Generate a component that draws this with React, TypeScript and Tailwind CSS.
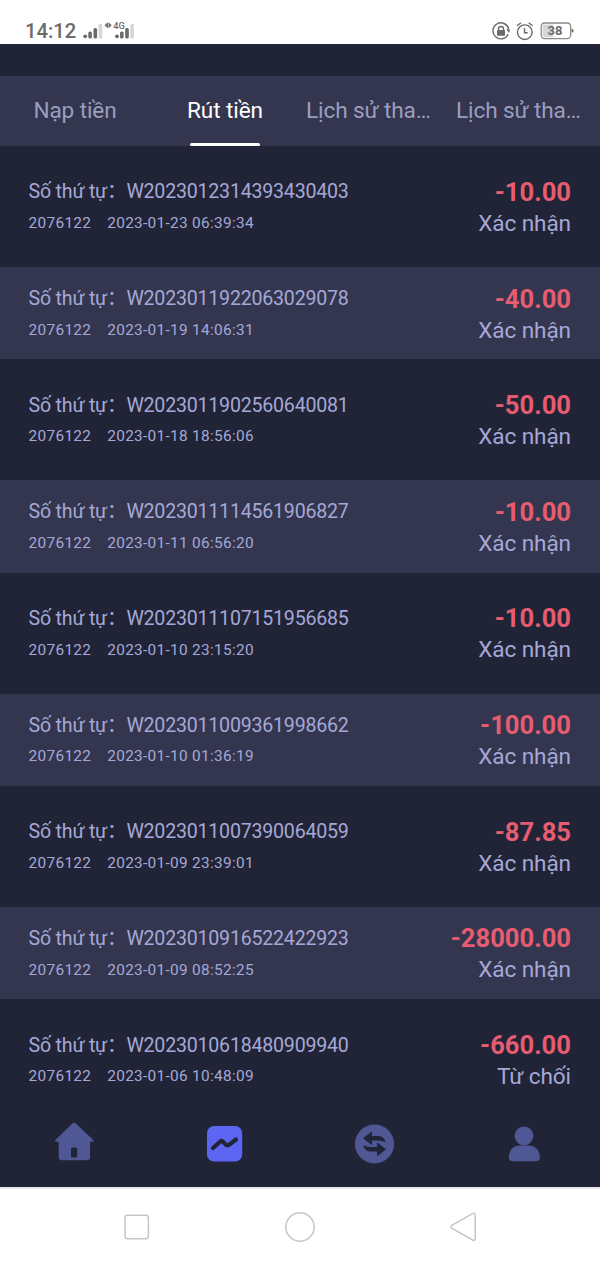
import React from "react";

interface Withdrawal {
  order: string;
  time: string;
  amount: string;
  status: string;
}

const USER_ID = "2076122";

const tabs = ["Nạp tiền", "Rút tiền", "Lịch sử tha…", "Lịch sử tha…"];

const withdrawals: Withdrawal[] = [
  { order: "W2023012314393430403", time: "2023-01-23 06:39:34", amount: "-10.00", status: "Xác nhận" },
  { order: "W2023011922063029078", time: "2023-01-19 14:06:31", amount: "-40.00", status: "Xác nhận" },
  { order: "W2023011902560640081", time: "2023-01-18 18:56:06", amount: "-50.00", status: "Xác nhận" },
  { order: "W2023011114561906827", time: "2023-01-11 06:56:20", amount: "-10.00", status: "Xác nhận" },
  { order: "W2023011107151956685", time: "2023-01-10 23:15:20", amount: "-10.00", status: "Xác nhận" },
  { order: "W2023011009361998662", time: "2023-01-10 01:36:19", amount: "-100.00", status: "Xác nhận" },
  { order: "W2023011007390064059", time: "2023-01-09 23:39:01", amount: "-87.85", status: "Xác nhận" },
  { order: "W2023010916522422923", time: "2023-01-09 08:52:25", amount: "-28000.00", status: "Xác nhận" },
  { order: "W2023010618480909940", time: "2023-01-06 10:48:09", amount: "-660.00", status: "Từ chối" },
];

const StatusBar = () => (
  <header className="flex h-11 shrink-0 items-end bg-white pr-[26px] pb-[3px] pl-[25px] text-[#6b6b6b]">
    <span className="text-[20.2px] leading-[20px] font-medium">14:12</span>
    {/* signal bars, two SIMs */}
    <svg width="52" height="20" viewBox="0 0 52 20" className="ml-[6.5px]" fill="#6b6b6b">
      <circle cx="2.2" cy="15.3" r="1.9" />
      <rect x="5.3" y="10.5" width="3.6" height="7" rx="1.5" />
      <rect x="10.5" y="7" width="3.6" height="10.5" rx="1.5" />
      <rect x="15.6" y="3" width="3.6" height="14.5" rx="1" fill="#d6d6d6" />
      <path d="M21.5 4.2 L24.3 1.7 V6.7 Z M28.8 4.2 L26 1.7 V6.7 Z" />
      <rect x="24" y="1.7" width="0.9" height="5.2" />
      <rect x="25.5" y="1.7" width="0.9" height="5.2" />
      <circle cx="34" cy="15.3" r="1.9" />
      <rect x="37" y="10.5" width="3.6" height="7" rx="1.5" />
      <rect x="42.2" y="7" width="3.6" height="10.5" rx="1.5" />
      <rect x="47.3" y="3" width="3.6" height="14.5" rx="1" fill="#d6d6d6" />
      <text x="30.3" y="8.2" fontSize="9.2" fontWeight="500">4G</text>
    </svg>
    <div className="ml-auto flex items-center gap-[6px]">
      {/* rotation lock */}
      <svg width="18" height="20" viewBox="0 0 18 20" fill="none" stroke="#6b6b6b">
        <path d="M16.2 13.2 A8 8 0 1 1 16.7 8" strokeWidth="1.4" />
        <path d="M14.3 8.3 H18 L17 12 Z" fill="#6b6b6b" stroke="none" />
        <rect x="5" y="9" width="8" height="5.8" rx="0.8" fill="#6b6b6b" stroke="none" />
        <path d="M6.5 9.5 V8 A2.5 2.5 0 0 1 11.5 8 V9.5" strokeWidth="1.4" />
      </svg>
      {/* alarm */}
      <svg width="18" height="20" viewBox="0 0 18 20" fill="none" stroke="#6b6b6b" strokeWidth="1.4">
        <circle cx="8.8" cy="11.2" r="7.3" />
        <path d="M8.5 7 V11.7 H11.7" />
        <path d="M1 4.8 L5 1.8 M12.6 1.8 L16.6 4.8" />
      </svg>
      {/* battery */}
      <svg width="34" height="20" viewBox="0 0 34 20">
        <rect x="1.2" y="2" width="29.5" height="15.6" rx="3.5" fill="#fff" stroke="#8a8a8a" strokeWidth="1.3" />
        <path d="M5 3.4 H13 V16.2 H5 Q2.6 16.2 2.6 13.8 V5.8 Q2.6 3.4 5 3.4 Z" fill="#d6d6d6" />
        <rect x="31.6" y="8" width="1.8" height="3.6" rx="0.8" fill="#6b6b6b" />
        <text x="15" y="14.4" fontSize="13" fontWeight="700" textAnchor="middle" fill="#6b6b6b">38</text>
      </svg>
    </div>
  </header>
);

const Tabs = () => (
  <nav className="grid h-[70px] shrink-0 grid-cols-4 bg-[#34364f] text-[22.6px] leading-[70px] tracking-[-0.1px] whitespace-nowrap text-[#9a9ebf]">
    {tabs.map((tab, i) => (
      <div key={i} className="flex flex-col items-center px-[6px]">
        <span className={i === 1 ? "h-[67px] text-white" : i > 1 ? "h-[67px] w-full" : "h-[67px]"}>
          {tab}
        </span>
        {i === 1 && <span className="h-[3px] w-[70px] rounded-full bg-white" />}
      </div>
    ))}
  </nav>
);

const Row = ({ item }: { item: Withdrawal }) => (
  <li className="flex h-[92.4px] shrink-0 justify-between px-[29px] pt-[15.5px] text-[#a5a8d6] even:bg-[#34364f]">
    <div className="-ml-[0.4px] pt-[0.6px]">
      <p className="h-[30.6px] text-[19.6px] leading-8 tracking-[-0.22px] whitespace-nowrap">Số thứ tự：{item.order}</p>
      <p className="flex h-8 gap-4 text-[15.4px] leading-8 tracking-[0.3px]">
        <span>{USER_ID}</span>
        <span>{item.time}</span>
      </p>
    </div>
    <div className="text-right">
      <p className="h-8 text-[25.6px] leading-8 font-bold text-[#e65c70]">{item.amount}</p>
      <p className="h-8 text-[22.6px] leading-8 tracking-[-0.1px]">{item.status}</p>
    </div>
  </li>
);

const BottomNav = () => (
  <nav className="grid h-[87px] shrink-0 grid-cols-4 place-items-center bg-[#212436]">
    {/* home */}
    <svg width="40" height="40" viewBox="0 0 40 40" fill="#4f5894" className="overflow-visible">
      <path d="M18 -0.9 Q19.1 -1.8 20.2 -0.9 L38.3 16 Q39.2 17.8 37.4 17.8 H35 V33 Q35 36.3 31.7 36.3 H7 Q3.7 36.3 3.7 33 V17.8 H1 Q-0.8 17.6 0.3 16 Z" />
      <rect x="16" y="23.5" width="6.2" height="10" rx="1.5" fill="#212436" />
    </svg>
    {/* records */}
    <svg width="40" height="40" viewBox="0 0 40 40">
      <rect x="2" y="2" width="35.2" height="35.5" rx="7" fill="#5c66f2" />
      <path
        d="M8 24 L15 17.7 Q16.6 16.3 18 17.8 L21 20.7 Q22.3 22 24 20.8 L31 15.5"
        fill="none"
        stroke="#212436"
        strokeWidth="4.2"
        strokeLinecap="round"
      />
    </svg>
    {/* exchange */}
    <svg width="40" height="40" viewBox="0 0 40 40">
      <circle cx="19.5" cy="20" r="19.5" fill="#4f5894" />
      <g fill="#212436">
        <path d="M8 14.3 L17 7.2 V12 H23 Q29.5 12 30.5 18.2 Q27.5 16.6 23 16.6 H17 V21.3 Z" />
        <path d="M31 25.3 L22 32.4 V27.6 H16 Q9.5 27.6 8.2 21 Q11.5 23 16 23 H22 V18.3 Z" />
      </g>
    </svg>
    {/* profile */}
    <svg width="40" height="40" viewBox="0 0 40 40" fill="#4f5894">
      <circle cx="19" cy="11.8" r="9.4" />
      <path d="M3.8 33 Q4.5 21.8 15 21.4 H23.5 Q34 21.8 35 33 Q35 37.3 30.5 37.3 H8 Q3.8 37.3 3.8 33 Z" />
    </svg>
  </nav>
);

const SystemNav = () => (
  <footer className="flex flex-1 items-center justify-center gap-[135px] border-t-2 border-[#e6e7ee] bg-white pb-[2px]">
    <svg width="26" height="30" viewBox="0 0 26 30" fill="none" stroke="#c6c6c6" strokeWidth="1.5">
      <rect x="1" y="3.2" width="23.4" height="23.6" rx="2.5" />
    </svg>
    <svg width="30" height="30" viewBox="0 0 30 30" fill="none" stroke="#c6c6c6" strokeWidth="1.5">
      <circle cx="15" cy="15" r="14.2" />
    </svg>
    <svg width="26" height="30" viewBox="0 0 26 30" fill="none" stroke="#c6c6c6" strokeWidth="1.5">
      <path d="M22.5 1.6 Q25.2 0.4 25.2 3.2 V26.5 Q25.2 29.4 22.5 28 L2.2 16.4 Q0 14.8 2.2 13.2 Z" />
    </svg>
  </footer>
);

const App: React.FC = () => {
  return (
    <div className="flex h-[1267px] w-[600px] flex-col overflow-hidden bg-[#212436] font-['Roboto','Noto_Sans_CJK_SC',sans-serif]">
      <StatusBar />
      <div className="h-8 shrink-0" />
      <Tabs />
      <ul className="flex h-[954px] shrink-0 flex-col gap-[14.26px] overflow-hidden pt-[14.4px]">
        {withdrawals.map((item) => (
          <Row key={item.order} item={item} />
        ))}
      </ul>
      <BottomNav />
      <SystemNav />
    </div>
  );
};

export default App;
